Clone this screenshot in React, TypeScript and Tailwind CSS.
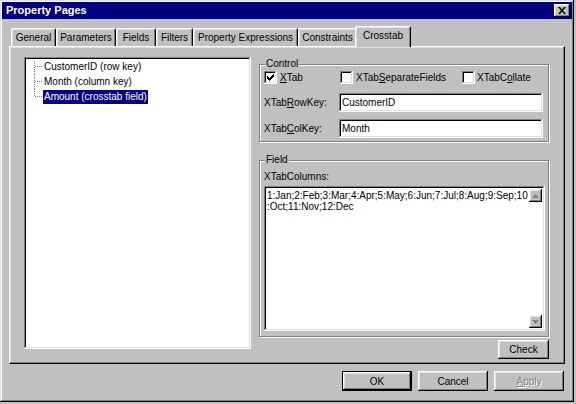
import React from "react";

const raised =
  "bg-[#c0c0c0] shadow-[inset_-1px_-1px_#000,inset_1px_1px_#fff,inset_-2px_-2px_#808080,inset_2px_2px_#dfdfdf]";
const sunken =
  "shadow-[inset_-1px_-1px_#fff,inset_1px_1px_#808080,inset_-2px_-2px_#dfdfdf,inset_2px_2px_#000]";

const tabs = [
  { label: "General", w: "w-[45px]" },
  { label: "Parameters", w: "w-[60px]" },
  { label: "Fields", w: "w-[40px]" },
  { label: "Filters", w: "w-[37px]" },
  { label: "Property Expressions", w: "w-[105px]" },
  { label: "Constraints", w: "w-[59px]" },
];

const treeItems = ["CustomerID (row key)", "Month (column key)", "Amount (crosstab field)"];

function Checkbox({ checked }: { checked?: boolean }) {
  return (
    <span className={`w-[13px] h-[13px] bg-white shrink-0 flex items-center justify-center ${sunken}`}>
      {checked && (
        <svg width="7" height="7" viewBox="0 0 7 7">
          <path d="M0 2h1v1h1v1h1V3h1V2h1V1h1V0h1v3h-1v1h-1v1h-1v1h-1v1H2V6H1V5H0z" fill="#000" />
        </svg>
      )}
    </span>
  );
}

function ScrollArrow({ up }: { up?: boolean }) {
  return (
    <div className={`w-[13px] h-[13px] flex items-center justify-center ${raised}`}>
      <svg width="7" height="4" viewBox="0 0 7 4">
        <path d={up ? "M3.5 0L7 4H0z" : "M0 0h7L3.5 4z"} fill="#808080" />
      </svg>
    </div>
  );
}

export default function App() {
  return (
    <div className="w-[576px] h-[404px] bg-[#c0c0c0] font-['Liberation_Sans',Arial,sans-serif] text-[10px] text-black">
      <div className="w-[574px] h-[402px] p-[2px] flex flex-col shadow-[inset_-1px_-1px_#000,inset_1px_1px_#dfdfdf,inset_-2px_-2px_#808080,inset_2px_2px_#fff]">
        {/* タイトルバー */}
        <div className="h-[17px] bg-[#000080] flex items-center justify-between pl-[4px] pr-[2px]">
          <span className="text-white text-[11px] font-bold leading-none">Property Pages</span>
          <div className={`w-[16px] h-[13px] flex items-center justify-center ${raised}`}>
            <svg width="8" height="7" viewBox="0 0 8 7">
              <path d="M0 0h2l2 2.5L6 0h2L5 3.5 8 7H6L4 4.5 2 7H0l3-3.5z" fill="#000" />
            </svg>
          </div>
        </div>

        <div className="px-[7px]">
          {/* タブ */}
          <div className="mt-[7px] h-[20px] flex items-end pl-[2px]">
            {tabs.map((t) => (
              <div
                key={t.label}
                className={`${t.w} h-[18px] flex items-center justify-center border-t border-l border-white border-r border-r-black rounded-t-[2px] shadow-[inset_-1px_0_#808080,inset_1px_1px_#dfdfdf] whitespace-nowrap`}
              >
                {t.label}
              </div>
            ))}
            <div className="relative z-10 -ml-[2px] -mb-[1px] w-[56px] h-[21px] pb-[3px] flex items-center justify-center bg-[#c0c0c0] border-t border-l border-white border-r border-r-black rounded-t-[2px] shadow-[inset_-1px_0_#808080,inset_1px_1px_#dfdfdf]">
              Crosstab
            </div>
          </div>

          {/* タブパネル */}
          <div className="h-[318px] border border-t-white border-l-white border-r-black border-b-black shadow-[inset_-1px_-1px_#808080,inset_1px_1px_#dfdfdf] pt-[10px] pl-[14px] flex gap-[8px]">
            {/* ツリー */}
            <div className={`w-[227px] h-[292px] bg-white ${sunken} pt-[2px] pl-[2px]`}>
              {treeItems.map((item, i) => (
                <div key={item} className="h-[15px] flex items-center pl-[8px]">
                  <svg width="9" height="15" viewBox="0 0 9 15" className="shrink-0">
                    <line
                      x1="0.5"
                      x2="0.5"
                      y1={i === 0 ? 2 : 0}
                      y2={i === treeItems.length - 1 ? 8 : 15}
                      stroke="#808080"
                      strokeDasharray="1 1"
                    />
                    <line x1="1" x2="9" y1="7.5" y2="7.5" stroke="#808080" strokeDasharray="1 1" />
                  </svg>
                  <span
                    className={`h-[14px] leading-[14px] px-[1px] whitespace-nowrap ${
                      i === 2 ? "bg-[#000080] text-white" : ""
                    }`}
                  >
                    {item}
                  </span>
                </div>
              ))}
            </div>

            {/* 右側 */}
            <div className="w-[290px] mt-[1px] flex flex-col">
              <fieldset className="border border-[#808080] shadow-[inset_1px_1px_#fff,1px_1px_#fff] pl-[4px] pr-[5px] pb-[3px]">
                <legend className="ml-[1px] px-[1px] bg-[#c0c0c0] leading-[12px]">Control</legend>
                <div className="mt-[1px] h-[13px] flex items-center">
                  <div className="w-[76px] flex items-center gap-[3px]">
                    <Checkbox checked />
                    <span>
                      <u>X</u>Tab
                    </span>
                  </div>
                  <div className="w-[122px] flex items-center gap-[3px]">
                    <Checkbox />
                    <span>
                      XTab<u>S</u>eparateFields
                    </span>
                  </div>
                  <div className="flex items-center gap-[2px]">
                    <Checkbox />
                    <span>
                      XTabC<u>o</u>llate
                    </span>
                  </div>
                </div>
                <div className="mt-[9px] h-[19px] flex items-center">
                  <span className="w-[75px]">
                    XTab<u>R</u>owKey:
                  </span>
                  <div className={`flex-1 h-[19px] bg-white ${sunken} pl-[3px] flex items-center`}>CustomerID</div>
                </div>
                <div className="mt-[7px] h-[19px] flex items-center">
                  <span className="w-[75px]">
                    XTab<u>C</u>olKey:
                  </span>
                  <div className={`flex-1 h-[19px] bg-white ${sunken} pl-[3px] flex items-center`}>Month</div>
                </div>
              </fieldset>

              <fieldset className="mt-[12px] border border-[#808080] shadow-[inset_1px_1px_#fff,1px_1px_#fff] pl-[4px] pr-[3px] pb-[5px]">
                <legend className="ml-[1px] px-[1px] bg-[#c0c0c0] leading-[12px]">Field</legend>
                <div className="mt-[5px] h-[12px] leading-[12px]">XTabColumns:</div>
                <div className={`mt-[3px] h-[145px] bg-white ${sunken} p-[2px] flex`}>
                  <div className="flex-1 pt-[2px] pl-[1px] leading-[11px]">
                    <div>1:Jan;2:Feb;3:Mar;4:Apr;5:May;6:Jun;7:Jul;8:Aug;9:Sep;10</div>
                    <div>:Oct;11:Nov;12:Dec</div>
                  </div>
                  <div className="w-[14px] pt-[1px] pb-[1px] flex flex-col justify-between">
                    <ScrollArrow up />
                    <ScrollArrow />
                  </div>
                </div>
              </fieldset>

              <button className={`mt-[3px] self-end w-[51px] h-[19px] ${raised} text-[10px]`}>Check</button>
            </div>
          </div>

          {/* 下部ボタン */}
          <div className="mt-[7px] flex justify-end gap-[6px] pr-[1px]">
            <button className="w-[70px] h-[20px] border border-black">
              <div className={`w-full h-full flex items-center justify-center ${raised}`}>OK</div>
            </button>
            <button className={`w-[70px] h-[20px] ${raised}`}>Cancel</button>
            <button className={`w-[70px] h-[20px] ${raised} text-[#808080] [text-shadow:1px_1px_0_#fff]`}>
              <u>A</u>pply
            </button>
          </div>
        </div>
      </div>
    </div>
  );
}
